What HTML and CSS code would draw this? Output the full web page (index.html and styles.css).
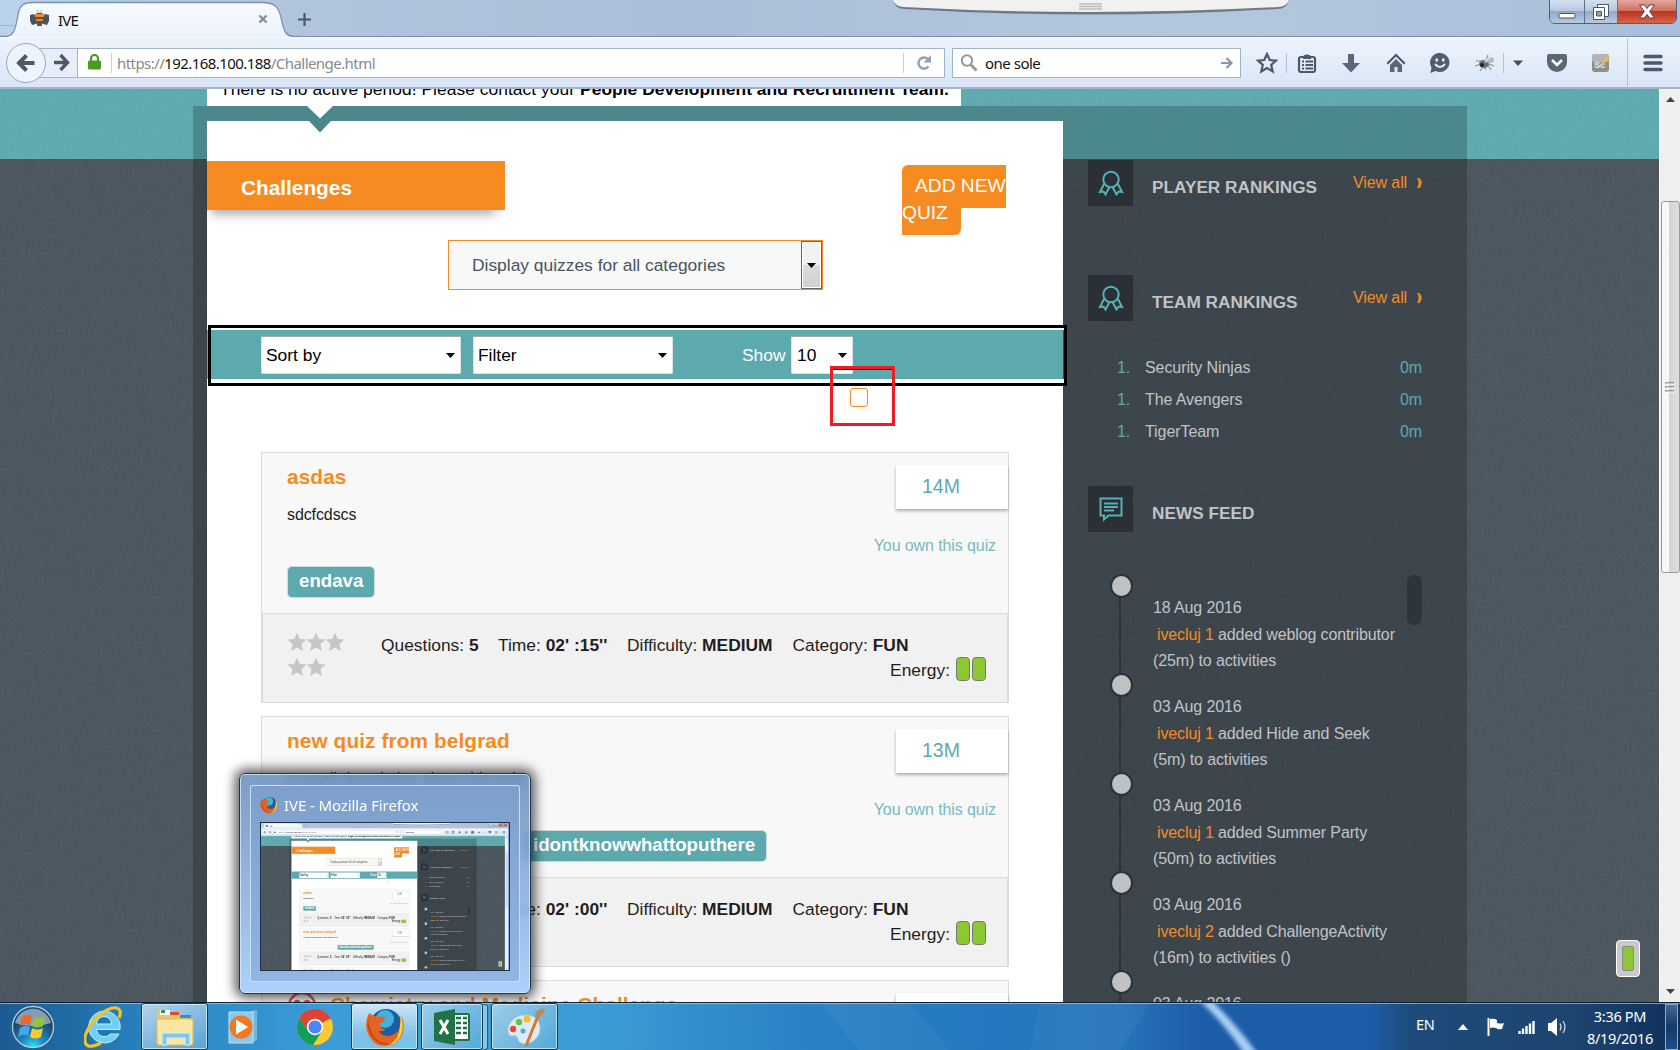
FILE: index.html
```html
<!DOCTYPE html>
<html lang="en">
<head>
<meta charset="utf-8">
<title>IVE</title>
<link rel="stylesheet" href="styles.css">
</head>
<body>
<div class="browser" id="browser">
  <div class="tabstrip">
    <svg class="tab-shape" width="300" height="38" viewBox="0 0 300 38">
      <defs><linearGradient id="tabg" x1="0" y1="0" x2="0" y2="1"><stop offset="0" stop-color="#f8fbfe"/><stop offset="1" stop-color="#eaf2fb"/></linearGradient></defs>
      <path d="M0 38 V36.5 H4 C13 36.5 15 31 17 20 C19 7 21 2.5 32 2.5 H262 C275 2.5 279 7 281.500 20 C284 32 286 36.500 295 36.500 H300 V38Z" fill="url(#tabg)"/>
      <path d="M0 36.500 H4 C13 36.500 15 31 17 20 C19 7 21 2.500 32 2.500 H262 C275 2.500 279 7 281.500 20 C284 32 286 36.500 295 36.500 H300" fill="none" stroke="#7d90a8" stroke-width="1.300"/>
    </svg>
    <div class="tab">
      <svg width="21" height="18" viewBox="0 0 21 18"><path d="M1 5l4-1 2 3v7l-4 1-2-4zM20 5l-4-1-2 3v7l4 1 2-4z" fill="#4c545e"/><rect x="6" y="3" width="9" height="11" rx="3" fill="#59504a"/><path d="M6 4h9v3H6zM7 9h7v2H7z" fill="#f08a24"/><path d="M8 0l2 3M13 0l-2 3" stroke="#aaa"/><rect x="8" y="13" width="5" height="3" fill="#555"/></svg>
      <span class="tab-title">IVE</span>
      <svg class="tab-x" width="10" height="10" viewBox="0 0 10 10"><path d="M1.500 1.500l7 7M8.500 1.500l-7 7" stroke="#86909c" stroke-width="2.400"/></svg>
      <svg width="13" height="13" viewBox="0 0 13 13"><path d="M6.500 0v13M0 6.500h13" stroke="#4d5967" stroke-width="2.200"/></svg>
    </div>
    <svg class="remote-bar" width="400" height="20" viewBox="0 0 400 20"><path d="M2 0 Q4 9 14 9 Q200 20 386 9 Q396 9 398 0Z" fill="#55606c" opacity=".75"/><path d="M2 0 Q4 6 12 7 Q200 17 388 7 Q396 6 398 0Z" fill="#f1f1f1"/><path d="M188 4h23M188 6.500h23M188 9h23" stroke="#bdbdbd" stroke-width="1.400"/></svg>
    <div class="winctl">
      <span class="wc wc-min"><svg width="18" height="8" viewBox="0 0 18 8"><rect x="1" y="1.500" width="16" height="4.500" rx="1" fill="#fff" stroke="#4a5566"/></svg></span>
      <span class="wc wc-max"><svg width="18" height="18" viewBox="0 0 18 18"><g fill="#fff" stroke="#4a5566"><path d="M5.500 1.500h11v12h-11z"/><path d="M1.500 4.500h11v12h-11z"/><path d="M4.500 8.500h5v4.500h-5z" fill="#8fa6c0"/></g></svg></span>
      <span class="wc wc-close"><svg width="18" height="15" viewBox="0 0 18 15"><path d="M1.500 1h5l2.500 3.500L11.500 1h5l-4.800 6.500 4.800 6.500h-5L9 10.500 6.500 14h-5l4.800-6.500z" fill="#fff" stroke="#5a3a40"/></svg></span>
    </div>
  </div>
  <div class="toolbar">
    <div class="back"><svg width="20" height="20" viewBox="0 0 20 20"><path d="M18.500 10H4M10.500 2.500L3 10l7.500 7.500" fill="none" stroke="#4d5967" stroke-width="4"/></svg></div>
    <div class="urlbar">
      <div class="fwd"><svg width="17" height="19" viewBox="0 0 17 19"><path d="M1 9.500h12M7.500 2l7 7.500-7 7.500" fill="none" stroke="#4d5967" stroke-width="3.400"/></svg></div>
      <svg class="lock" width="13" height="16" viewBox="0 0 13 16"><path d="M3 7V4.500a3.500 3.500 0 0 1 7 0V7" fill="none" stroke="#4a9a22" stroke-width="2.200"/><rect x="0" y="6.500" width="13" height="9" rx="1.500" fill="#4a9a22"/></svg>
      <i class="vsep"></i>
      <span class="url">https://<b>192.168.100.188</b>/Challenge.html</span>
      <i class="vsep reload-sep"></i>
      <svg class="reload" width="16" height="16" viewBox="0 0 16 16"><path d="M12.500 11.500A5.600 5.600 0 1 1 12 4" fill="none" stroke="#93a2b3" stroke-width="2.500"/><path d="M15 0v7.500H7.500z" fill="#93a2b3"/></svg>
    </div>
    <div class="search">
      <svg width="18" height="18" viewBox="0 0 18 18"><circle cx="7" cy="6.500" r="5.200" fill="none" stroke="#999" stroke-width="2"/><path d="M10.500 10.500l6 6" stroke="#999" stroke-width="3"/></svg>
      <span>one sole</span>
      <svg width="12" height="12" viewBox="0 0 12 12"><path d="M0 6h9M5.500 1l5 5-5 5" fill="none" stroke="#8798aa" stroke-width="2.200"/></svg>
    </div>
    <div class="tools">
      <svg width="22" height="22" viewBox="0 0 22 22"><path d="M11 2l2.700 6 6.300.6-4.800 4.300 1.500 6.500L11 16l-5.700 3.400 1.500-6.500L2 8.600 8.300 8z" fill="none" stroke="#4d5967" stroke-width="2.200"/></svg>
      <i class="vsep"></i>
      <svg width="20" height="20" viewBox="0 0 20 20"><rect x="2" y="4" width="16" height="15" rx="2" fill="none" stroke="#4d5967" stroke-width="2.200"/><path d="M6 4l1-2h1.500a2 2 0 0 1 3 0H13l1 2v2H6z" fill="#4d5967"/><path d="M5 8.500h2M8.500 8.500H16M5 12h2M8.500 12H16M5 15.500h2M8.500 15.500H16" stroke="#4d5967" stroke-width="1.800"/></svg>
      <svg width="20" height="20" viewBox="0 0 20 20"><path d="M7 1h6v9h6l-9 9.500L1 10h6z" fill="#5b6774"/></svg>
      <svg width="20" height="20" viewBox="0 0 20 20"><path d="M10 0.500L0.500 10l1.500 1.500 8-8 8 8 1.500-1.500z" fill="#4d5967"/><path d="M10 6l6 6v7h-4.500v-5h-3v5H4v-7z" fill="#5b6774"/></svg>
      <svg width="22" height="22" viewBox="0 0 22 22"><path d="M11 1a9.500 9.500 0 1 1-4.500 17.900L1.500 21l1-5.500A9.500 9.500 0 0 1 11 1z" fill="#515d6a"/><path d="M6.500 6.500h2.500v3H6.500zM13 6.500h2.500v3H13z" fill="#e6eff9"/><path d="M6 12q5 6 10 0" fill="none" stroke="#e6eff9" stroke-width="2"/></svg>
      <svg width="22" height="20" viewBox="0 0 22 20"><g stroke="#8a8d90" stroke-width="1.100" fill="none"><path d="M2 8h6l2 2M1 13l6-2M6 18l4-6M11 17l1-5M17 17l-3-5M20 13l-5-2M14 2l-2 5"/></g><ellipse cx="10" cy="11" rx="5" ry="4" fill="#6b6d70"/><ellipse cx="16" cy="7" rx="4" ry="3" fill="#b8babc"/><circle cx="8" cy="12" r="2" fill="#222"/><path d="M11 9l5-5" stroke="#ddd" stroke-width="2"/></svg>
      <i class="vsep"></i>
      <svg width="10" height="6" viewBox="0 0 10 6"><path d="M0 .5h10L5 6z" fill="#4d4d4d"/></svg>
      <svg width="22" height="20" viewBox="0 0 22 20"><path d="M3 1h16q2 0 2 2v6a10 10 0 0 1-20 0V3q0-2 2-2z" fill="#5b6774"/><path d="M6 7l5 5 5-5" fill="none" stroke="#fff" stroke-width="2.600"/></svg>
      <svg width="20" height="20" viewBox="0 0 20 20"><rect x="1" y="1" width="17" height="18" rx="3" fill="#8f8f8f"/><rect x="1" y="1" width="17" height="8" rx="3" fill="#b5b5b5"/><text x="3" y="15" class="sc">Sc</text><path d="M10 11l7-9 2 1.500-7 9z" fill="#e6bb4e"/></svg>
      <i class="vsep tall"></i>
      <svg width="20" height="18" viewBox="0 0 20 18"><path d="M2 2.500h16M2 9h16M2 15.500h16" stroke="#4d5967" stroke-width="3.400" stroke-linecap="round"/></svg>
    </div>
  </div>
  <div class="viewport">
    <div class="page">
      <svg class="grain" width="1658" height="913"><filter id="grain"><feTurbulence type="fractalNoise" baseFrequency=".4 .3" numOctaves="2" seed="4"/><feColorMatrix type="saturate" values="0"/></filter><rect width="1658" height="913" filter="url(#grain)"/></svg>
      <div class="notice"><p>There is no active period! Please contact your <b>People Development and Recruitment Team.</b></p></div>
      <div class="shell">
        <svg class="pointer" width="26" height="27" viewBox="0 0 26 27"><path d="M0 0h26L13 12.500z" fill="#fff"/><path d="M2 15h22L13 26.500z" fill="#4a8889"/></svg>
        <main class="main">
          <div class="head">
            <h1>Challenges</h1>
            <div class="add"><a>ADD NEW<br>QUIZ</a></div>
          </div>
          <div class="category"><span>Display quizzes for all categories</span><i><svg width="9" height="5" viewBox="0 0 9 5"><path d="M0 0h9L4.500 5z"/></svg></i></div>
          <div class="sortbar">
            <div class="sel">Sort by<svg width="9" height="5" viewBox="0 0 9 5"><path d="M0 0h9L4.500 5z"/></svg></div>
            <div class="sel">Filter<svg width="9" height="5" viewBox="0 0 9 5"><path d="M0 0h9L4.500 5z"/></svg></div>
            <span class="show">Show</span>
            <div class="sel small">10<svg width="9" height="5" viewBox="0 0 9 5"><path d="M0 0h9L4.500 5z"/></svg></div>
          </div>
          <div class="check"></div>
          <article class="card">
            <div class="body">
              <div class="left"><h2>asdas</h2><p>sdcfcdscs</p><span class="tag">endava</span></div>
              <div class="right"><div class="pts">14M</div><p>You own this quiz</p></div>
            </div>
            <div class="foot">
              <div class="stars"><svg><use href="#star"/></svg><svg><use href="#star"/></svg><svg><use href="#star"/></svg><svg><use href="#star"/></svg><svg><use href="#star"/></svg></div>
              <div class="stats">
                <div class="line"><span class="q">Questions: <b>5</b></span><span class="t">Time: <b>02' :15''</b></span><span class="d">Difficulty: <b>MEDIUM</b></span><span>Category: <b>FUN</b></span></div>
                <div class="energy">Energy: <i></i><i></i></div>
              </div>
            </div>
          </article>
          <article class="card">
            <div class="body">
              <div class="left"><h2>new quiz from belgrad</h2><p>a small description about this quiz</p><div class="tags"><span class="tag">idontknowwhattoputhere</span></div></div>
              <div class="right"><div class="pts">13M</div><p>You own this quiz</p></div>
            </div>
            <div class="foot">
              <div class="stars"><svg><use href="#star"/></svg><svg><use href="#star"/></svg><svg><use href="#star"/></svg><svg><use href="#star"/></svg><svg><use href="#star"/></svg></div>
              <div class="stats">
                <div class="line"><span class="q">Questions: <b>5</b></span><span class="t">Time: <b>02' :00''</b></span><span class="d">Difficulty: <b>MEDIUM</b></span><span>Category: <b>FUN</b></span></div>
                <div class="energy">Energy: <i></i><i></i></div>
              </div>
            </div>
          </article>
          <article class="card">
            <div class="body">
              <div class="left"><h2 class="withface"><svg width="30" height="30" viewBox="0 0 30 30"><g fill="none" stroke="#d9534f" stroke-width="2.400"><circle cx="15" cy="15" r="13"/><path d="M7 12q3-4 6 0M17 12q3-4 6 0M9 21q6-5 12 0"/></g></svg>Chemistry and Medicine Challenge</h2></div>
              <div class="right"><div class="pts"></div></div>
            </div>
          </article>
        </main>
        <aside class="side">
          <section class="rank first">
            <div class="ico"><svg width="26" height="26" viewBox="0 0 26 26"><use href="#medal"/></svg></div>
            <h3>PLAYER RANKINGS</h3><a>View all <svg width="6" height="10" viewBox="0 0 6 10"><path d="M0 0h2.500Q7 5 2.500 10H0Q3 5 0 0z" fill="#e08a2c"/></svg></a>
          </section>
          <section class="rank">
            <div class="ico"><svg width="26" height="26" viewBox="0 0 26 26"><use href="#medal"/></svg></div>
            <h3>TEAM RANKINGS</h3><a>View all <svg width="6" height="10" viewBox="0 0 6 10"><path d="M0 0h2.500Q7 5 2.500 10H0Q3 5 0 0z" fill="#e08a2c"/></svg></a>
          </section>
          <ul class="teams">
            <li><em>1.</em>Security Ninjas<em>0m</em></li>
            <li><em>1.</em>The Avengers<em>0m</em></li>
            <li><em>1.</em>TigerTeam<em>0m</em></li>
          </ul>
          <section class="rank news">
            <div class="ico"><svg width="26" height="26" viewBox="0 0 26 26"><g fill="none" stroke="#57b0b3" stroke-width="2"><path d="M2.500 2.500h21v17h-13l-4.500 4v-4H2.500z"/><path d="M6 7.500h14M6 11h14M6 14.500h10"/></g></svg></div>
            <h3>NEWS FEED</h3>
          </section>
          <div class="feedwrap">
            <ol class="feed">
              <li><p>18 Aug 2016</p><p><a>ivecluj 1</a> added weblog contributor</p><p>(25m) to activities</p></li>
              <li><p>03 Aug 2016</p><p><a>ivecluj 1</a> added Hide and Seek</p><p>(5m) to activities</p></li>
              <li><p>03 Aug 2016</p><p><a>ivecluj 1</a> added Summer Party</p><p>(50m) to activities</p></li>
              <li><p>03 Aug 2016</p><p><a>ivecluj 2</a> added ChallengeActivity</p><p>(16m) to activities ()</p></li>
              <li><p>03 Aug 2016</p></li>
            </ol>
            <div class="feed-thumb"></div>
          </div>
        </aside>
      </div>
      <div class="battery"><i></i></div>
    </div>
    <div class="scroll">
      <svg width="9" height="5" viewBox="0 0 9 5"><path d="M0 5h9L4.500 0z" fill="#444"/></svg>
      <div class="scroll-thumb"><svg width="10" height="11" viewBox="0 0 10 11"><path d="M0 1h9M0 5h9M0 9h9" stroke="#555" stroke-width="1.200"/><path d="M1 2h9M1 6h9M1 10h9" stroke="#fff"/></svg></div>
      <svg class="dn" width="9" height="5" viewBox="0 0 9 5"><path d="M0 0h9L4.500 5z" fill="#444"/></svg>
    </div>
  </div>
</div>

<div class="mark mark-black"></div>
<div class="mark mark-red"></div>
<div class="mark mark-line"></div>

<div class="preview">
  <div class="preview-in">
    <div class="preview-title"><svg width="18" height="18" viewBox="0 0 40 40"><use href="#fox"/></svg><span>IVE - Mozilla Firefox</span></div>
    <div class="thumb" id="thumb"></div>
  </div>
</div>

<div class="taskbar">
  <svg class="streak" width="1680" height="48" viewBox="0 0 1680 48"><defs><linearGradient id="st" x1="0" x2="1"><stop offset="0" stop-color="#9cc8f2" stop-opacity="0"/><stop offset=".5" stop-color="#a9cff4"/><stop offset="1" stop-color="#9cc8f2" stop-opacity="0"/></linearGradient><filter id="soft"><feGaussianBlur stdDeviation="2"/></filter></defs><path d="M820 0h90l40 48h-90zM1040 0h110l-30 48h-90z" fill="#fff" opacity=".04"/><path d="M1200 -2h12Q1235 20 1257 50h-13Q1224 20 1200 -2z" fill="#a9cff4" filter="url(#soft)"/></svg>
  <div class="tb orb"><svg width="44" height="44" viewBox="0 0 44 44"><defs><radialGradient id="og" cx=".5" cy="1" r=".9"><stop offset="0" stop-color="#2ee4ff"/><stop offset=".35" stop-color="#1a86bd"/><stop offset=".8" stop-color="#1a4468"/></radialGradient></defs><circle cx="22" cy="22" r="20.500" fill="url(#og)" stroke="#b9cbdb" stroke-width="1.300"/><path d="M4 18a18.500 18.500 0 0 1 36 0q-18 6-36 0z" fill="#dce7ef" opacity=".55"/><path d="M11 12q5-4 10-1l-2 9q-5-3-10 1z" fill="#f0652a"/><path d="M23 12q5 3 11-1l-2 10q-6 3-11 0z" fill="#8fc63f"/><path d="M9 23q5-4 10-1l-2 9q-5-3-10 1z" fill="#45a6e6"/><path d="M21 23q5 3 11 0l-2 9q-6 3-11 0z" fill="#fdc92f"/></svg></div>
  <div class="tb ie"><svg width="40" height="42" viewBox="0 0 40 42"><path d="M20 5a16 16 0 1 0 15 23h-8.500a8 8 0 0 1-14-4.500H36A16 16 0 0 0 20 5zm-7.500 13a7.500 7.500 0 0 1 15 0z" fill="#6fd0f5" stroke="#c5effc"/><path d="M35 12c4-9-2-13-12-8C10 10-3 30 2 38c2 4 9 2 15-1" fill="none" stroke="#f3c51c" stroke-width="3.200"/></svg></div>
  <div class="tb task on"><svg width="42" height="42" viewBox="0 0 42 42"><path d="M3 6q0-3 3-3h7l3 3h9l2 3h10v26H3z" fill="#e9c766"/><path d="M3 13h36v24q0 2-2 2H5q-2 0-2-2z" fill="#f9e6a2" stroke="#dcb958"/><path d="M6 4h10v5H6z" fill="#fff"/><path d="M7 4h4v3H7z" fill="#2f9b4a"/><path d="M16 6h9v3h-9z" fill="#d84c36"/><path d="M26 9h11v3H26z" fill="#3b8bd3"/><path d="M8 27h28v12h-5v-7H13v7H8z" fill="#80c9ee" stroke="#d5f1fc"/></svg></div>
  <div class="tb wmp"><svg width="36" height="38" viewBox="0 0 36 38"><path d="M24 3l7-1v30l-7 3z" fill="#73b7df"/><path d="M3 4h24v31H3z" fill="#8bc8ea" stroke="#bde2f5"/><circle cx="15" cy="19" r="11.500" fill="#f17922"/><path d="M10 11.500v15l12-7.500z" fill="#fff"/></svg></div>
  <div class="tb chrome"><svg width="36" height="36" viewBox="0 0 36 36"><circle cx="18" cy="18" r="18" fill="#fbc934"/><path d="M18 18L2.400 9A18 18 0 0 1 33.600 9z" fill="#dc4437"/><path d="M18 10h16a18 18 0 0 0-31.600-1L11 22z" fill="#dc4437"/><path d="M2.400 9A18 18 0 0 0 16 36l8.500-13L18 18l-7 4z" fill="#109d58"/><circle cx="18" cy="18" r="8.200" fill="#fff"/><circle cx="18" cy="18" r="6.600" fill="#4a87f3"/></svg></div>
  <div class="tb task lit"><svg width="40" height="40" viewBox="0 0 40 40"><use href="#fox"/></svg></div>
  <div class="tb task xl"><svg width="38" height="38" viewBox="0 0 38 38"><rect x="20" y="5" width="17" height="28" rx="2" fill="#1e7145"/><path d="M21 7h14v24H21z" fill="#fff"/><path d="M23 10h5M30 10h4M23 15h5M30 15h4M23 20h5M30 20h4M23 25h5M30 25h4" stroke="#1e7145" stroke-width="2.600"/><path d="M1 5l21-4v36L1 33z" fill="#207347"/><path d="M7 12l8 14M15 12L7 26" stroke="#fff" stroke-width="3"/></svg></div>
  <div class="xl-stack"></div>
  <div class="tb task paint"><svg width="40" height="40" viewBox="0 0 40 40"><path d="M20 8C8 8 2 18 3 25c1 6 6 3 8 4 3 2 1 7 8 8 9 0 17-8 16-17S28 8 20 8z" fill="#dcebf5" stroke="#a9c9de"/><circle cx="8" cy="22" r="3.200" fill="#e54b38"/><circle cx="14" cy="15" r="3.200" fill="#66c04b"/><circle cx="22" cy="12" r="3.500" fill="#fbb92d"/><circle cx="18" cy="24" r="2.500" fill="#58a7d5"/><path d="M21 39L33 9" stroke="#d57a2b" stroke-width="3"/><path d="M30 10q-1-8 10-9-1 8-7 10z" fill="#b98a5a"/></svg></div>
  <div class="tray">
    <span class="en">EN</span>
    <svg class="t1" width="10" height="6" viewBox="0 0 10 6"><path d="M0 6h10L5 0z" fill="#fff"/></svg>
    <svg class="t2" width="18" height="20" viewBox="0 0 18 20"><path d="M1.500 1v18" stroke="#fff" stroke-width="2"/><path d="M3 2q4-1 7 1v3q4 1 7 0l-2 6q-4 1-6-1-3-1-6 0z" fill="#fff"/></svg>
    <svg class="t3" width="17" height="14" viewBox="0 0 17 14"><path d="M1.500 14v-3M5 14V8.500M8.500 14V6M12 14V3.500M15.500 14V1" stroke="#fff" stroke-width="2.400"/></svg>
    <svg class="t4" width="20" height="20" viewBox="0 0 20 20"><path d="M1 6h3l6-5v18l-6-5H1z" fill="#fff"/><path d="M13 6.500q2 3.500 0 7M16 4q4 6 0 12" fill="none" stroke="#cfdbe8" stroke-width="1.300"/></svg>
    <div class="clock"><span>3:36 PM</span><span>8/19/2016</span></div>
    <div class="peek"></div>
  </div>
</div>

<svg class="defs" width="0" height="0">
  <symbol id="star" viewBox="0 0 18 18"><path d="M9 .5l2.600 5.700 6.200.6-4.700 4.200 1.400 6.300L9 14.200l-5.500 3.100L4.900 11 .2 6.800l6.200-.6z" fill="#c6c6c6" stroke="#c6c6c6" stroke-width=".6"/></symbol>
  <symbol id="medal" viewBox="0 0 26 26"><g fill="none" stroke="#57b0b3" stroke-width="2"><circle cx="13" cy="9.500" r="7.700"/><path d="M6 14L2 22l3.500-.5L7.500 24.500l4-7.500M20 14l4 8-3.500-.5L18.500 24.500l-4-7.500"/></g></symbol>
  <symbol id="fox" viewBox="0 0 40 40"><circle cx="21" cy="18" r="16" fill="#1c5f9f"/><circle cx="20" cy="12" r="9" fill="#41b2e2"/><path d="M4 6q-6 12 0 23t17 10q12-1 16-11t-1-20q2 10-2 15t-10 6q-8 0-10-5 4 1 7-2-4 1-6-3 0-4 4-4-1-3 2-4-4-3-8-1Q8 9 4 6z" fill="#e5641d"/><path d="M35 8q5 10 1 20t-15 11q11-4 13-14t1-17z" fill="#f9d342"/><path d="M4 10q-4 12 4 21t20 6q-16 0-21-11T4 10z" fill="#cc3d17"/></symbol>
</svg>
<script src="page.js"></script>
</body>
</html>
```
FILE: page.js
```js
// Live miniature of the browser window inside the taskbar preview.
const mini = document.getElementById('browser').cloneNode(true);
mini.removeAttribute('id');
mini.classList.add('mini');
mini.setAttribute('aria-hidden', 'true');
document.getElementById('thumb').appendChild(mini);
```
FILE: styles.css
```css
* { box-sizing: border-box; }
html, body { margin: 0; width: 1680px; height: 1050px; overflow: hidden; }
body { position: relative; font-family: "Liberation Sans", Arial, sans-serif; font-size: 16px; color: #222; }
h1, h2, h3, p, ul, ol { margin: 0; padding: 0; list-style: none; }
svg { display: block; flex: none; }
i, em { font-style: normal; }
.defs { position: absolute; }

.browser { width: 1680px; height: 1002px; display: flex; flex-direction: column; overflow: hidden; background: #dfeaf8; }
.tabstrip { position: relative; flex: none; height: 37px; display: flex; background: radial-gradient(ellipse at 0 70%, #86a8a6 0, rgba(134,168,166,0) 50px), linear-gradient(90deg, #b9d3ea 0, #b0c5dc 300px, #abc0d8 700px, #b3c7dc 1200px, #a9bfda 1680px); border-bottom: 1px solid #7d90a8; }
.tab-shape { position: absolute; left: 0; top: 0; }
.tab { position: relative; display: flex; align-items: center; height: 38px; padding-left: 29px; width: 320px; }
.tab-title { margin: 2px 0 0 8px; width: 200px; font: 15px/20px "Noto Sans", sans-serif; letter-spacing: -.8px; color: #111; }
.tab-x { margin-right: 30px; }
.remote-bar { position: absolute; left: 891px; top: 0; }
.winctl { position: absolute; left: 1549px; top: -1px; display: flex; height: 25px; border: 1px solid #4f6078; border-radius: 0 0 6px 6px; overflow: hidden; }
.wc { display: flex; align-items: center; justify-content: center; background: linear-gradient(#d3e0ee, #b4c8de 48%, #93abc7 50%, #b5cae1); border-right: 1px solid #5f7088; }
.wc-min { width: 35px; padding-top: 8px; }
.wc-max { width: 33px; }
.wc-close { width: 58px; border: 0; background: linear-gradient(#e4a79c, #d16d5d 48%, #bd3421 50%, #d86449); }

.toolbar { position: relative; flex: none; height: 52px; display: flex; align-items: center; background: linear-gradient(#edf4fc, #d9e6f7); border-top: 1px solid #f6fafe; border-bottom: 2px solid #a3b4ca; }
.back { position: relative; z-index: 1; flex: none; margin-left: 6px; width: 40px; height: 40px; border: 1px solid #96a7bb; border-radius: 50%; background: #edf4fc; display: flex; align-items: center; justify-content: center; }
.urlbar { margin-left: -10px; width: 909px; height: 30px; border: 1px solid #9fb3ca; background: #fff; display: flex; align-items: center; flex: none; }
.fwd { width: 41px; height: 28px; padding: 4px 0 0 16px; background: #e6eff9; border-right: 1px solid #9fb3ca; }
.lock { margin: -1px 10px 0 10px; }
.vsep { width: 1px; height: 20px; background: #d0d0d0; flex: none; }
.url { margin: 1px 0 0 5px; width: 786px; font: 15px/20px "Noto Sans", sans-serif; letter-spacing: -.56px; color: #888; white-space: nowrap; }
.url b { font-weight: 400; color: #111; }
.reload { margin-left: 12px; }
.search { margin-left: 7px; width: 289px; height: 30px; border: 1px solid #9fb3ca; background: #fff; display: flex; align-items: center; flex: none; padding: 0 7px; }
.search span { flex: 1; margin: 1px 0 0 7px; font: 15px/20px "Noto Sans", sans-serif; letter-spacing: -.5px; color: #111; }
.tools { display: flex; align-items: center; margin-left: 15px; }
.tools .vsep { height: 20px; background: #b3c2d4; }
.tools > :nth-child(2) { margin: 0 9.5px 0 8px; }
.tools > :nth-child(4) { margin-left: 24.500px; }
.tools > :nth-child(5) { margin-left: 25px; }
.tools > :nth-child(6) { margin-left: 23px; }
.tools > :nth-child(7) { margin-left: 22.500px; }
.tools > :nth-child(8) { margin: 0 9px 0 7px; }
.tools > :nth-child(10) { margin-left: 23px; }
.tools > :nth-child(11) { margin-left: 23.500px; }
.tools > .tall { height: 50px; margin: 0 15.500px; }
.sc { font: bold 9px "Liberation Sans", sans-serif; fill: #eee; }

.viewport { flex: 1; display: flex; min-height: 0; }
.page { position: relative; width: 1659px; overflow: hidden; background: linear-gradient(#5caaae 70px, #49545d 70px); }
.grain { position: absolute; left: 0; top: 0; opacity: .07; }
.notice { position: relative; margin-left: 207px; width: 754px; height: 17px; background: #fff; overflow: hidden; color: #000; }
.notice p { margin: -12px 0 0 13px; font-size: 17.4px; line-height: 24px; white-space: nowrap; letter-spacing: .05px; }
.shell { position: relative; margin-left: 193px; width: 1274px; height: 896px; padding: 15px 0 0 14px; background: rgba(0,0,0,.2); display: flex; }
.pointer { position: absolute; left: 114px; top: 0; z-index: 2; }
.main { flex: none; width: 856px; height: 900px; padding-top: 40px; background: #fff; }
.head { display: flex; height: 49px; }
.head h1 { width: 298px; padding-left: 34px; background: #f68b22; color: #fff; font-size: 20.8px; line-height: 54px; height: 49px; box-shadow: -3px 11px 10px -7px rgba(0,0,0,.35); }
.add { margin: 11px 0 0 397px; font-size: 19.2px; line-height: 27px; color: #fff; white-space: nowrap; }
.add a { background: #f68b22; padding: 10px 13px 12px; border-radius: 6px; }
.category { margin: 30px 0 0 241px; width: 375px; height: 50px; border: 1px solid #f68b22; background: #f8f8f8; display: flex; justify-content: space-between; padding-left: 23px; color: #49545d; font-size: 17.4px; line-height: 48px; }
.category i { width: 21px; border: 1px solid #666; box-shadow: inset 0 0 0 1px #fff; background: linear-gradient(#f2f2f2 50%, #dcdcdc 50%, #cfcfcf); display: flex; align-items: center; justify-content: center; }
.sortbar { margin-top: 40px; height: 49px; background: #5caaae; padding: 6px 0 0 54px; display: flex; font-size: 17.4px; line-height: 36px; color: #000; }
.sel { width: 200px; height: 38px; margin-right: 12px; border: 1px solid #dfe3e3; border-top-color: #aaa; border-radius: 2px; background: #fff; padding: 0 5px 0 4px; display: flex; align-items: center; justify-content: space-between; }
.sel.small { width: 62px; padding-left: 5px; }
.show { margin-left: 57px; width: 49px; color: #fff; line-height: 38px; }
.check { margin: 9px 0 45px 643px; width: 18px; height: 19px; border: 1px solid #f68b22; border-radius: 3px; }

.card { margin: 0 54px 13px; height: 251px; border: 1px solid #dcdcdc; background: #f8f8f8; }
.body { height: 160px; display: flex; justify-content: space-between; }
.left { padding: 9px 0 0 25px; }
.card h2 { font-size: 20.8px; line-height: 30px; color: #f68b22; white-space: nowrap; letter-spacing: .1px; }
.withface { display: flex; gap: 13px; }
.withface svg { margin-top: 1px; }
.left p { margin-top: 11px; line-height: 24px; letter-spacing: -.1px; }
.tag { display: inline-block; margin-top: 39px; height: 32px; padding: 0 11px; border: 1px solid #cfdcdc; border-radius: 5px; background: #5caaae; color: #fff; font-weight: bold; font-size: 18.7px; line-height: 27px; }
.tags { padding-left: 234px; }
.right { padding-top: 12px; text-align: right; }
.pts { margin-left: auto; width: 112px; height: 44px; padding-left: 26px; background: #fff; box-shadow: 0 2px 3px rgba(0,0,0,.3); text-align: left; color: #5caaae; font-size: 19.5px; line-height: 42px; }
.right p { margin: 25px 12px 0 0; line-height: 24px; color: #7bbabd; letter-spacing: -.1px; }
.foot { height: 90px; border: 1px solid #dcdcdc; background: #f1f1f1; padding: 19px 21px 0 25px; display: flex; font-size: 17.4px; line-height: 25px; color: #1e1e1e; }
.stars { flex: none; width: 60px; display: flex; flex-wrap: wrap; gap: 7px 1px; align-content: flex-start; }
.stars svg { width: 18px; height: 18px; }
.stats { flex: 1; padding-left: 33px; white-space: nowrap; }
.line { display: flex; }
.q { width: 117px; } .t { width: 129px; } .d { width: 165.5px; }
.energy { display: flex; justify-content: flex-end; gap: 2px; }
.energy i { margin-top: -1px; width: 14px; height: 24px; border: 1px solid #777; border-radius: 4px; background: #8cc832; }
.energy i:first-of-type { margin-left: 4px; }

.side { padding: 39px 0 0 25px; width: 404px; color: #c1c4c6; }
.rank { display: flex; height: 46px; margin-bottom: 69px; }
.ico { width: 45px; height: 46px; background: #2a3035; padding: 10px 0 0 10px; flex: none; }
.rank h3 { margin-left: 19px; width: 201px; font-size: 17.2px; line-height: 55px; white-space: nowrap; letter-spacing: .03px; }
.rank a { display: flex; align-items: center; gap: 10px; height: 45px; color: #f68b22; letter-spacing: -.1px; }
.teams { margin: -38px 0 38px; padding-left: 29px; letter-spacing: -.08px; }
.teams li { display: flex; height: 32px; line-height: 32px; width: 305px; }
.teams em { color: #5caaae; width: 28px; }
.teams em:last-child { margin-left: auto; width: auto; }
.rank.news { margin-bottom: 43px; }
.feedwrap { display: flex; height: 428px; }
.feed { width: 319px; padding-left: 31px; }
.feed li { position: relative; height: 99px; padding: 19px 0 0 32px; border-left: 2px solid #2b3339; line-height: 27px; white-space: nowrap; letter-spacing: -.12px; }
.feed li::before { content: ""; position: absolute; left: -11px; top: -1px; width: 19px; height: 20px; border-radius: 50%; background: #bfc1c3; border: 2px solid #2b3339; }
.feed p:nth-child(2) { padding-left: 4px; }
.feed p:nth-child(3) { margin-top: -1px; }
.feed a { color: #f68b22; }
.feed-thumb { width: 15px; height: 50px; border-radius: 7px; background: #2d353c; }
.battery { position: absolute; left: 1616px; top: 851px; width: 24px; height: 37px; border: 1px solid #fff; border-radius: 4px; background: #c9c9c9; padding: 5px; }
.battery i { display: block; width: 12px; height: 25px; border: 1px solid #888; border-radius: 2px; background: #8cc832; }
.scroll { width: 21px; background: #efefef; border-left: 1px solid #fff; display: flex; flex-direction: column; align-items: center; padding: 8px 0; }
.scroll-thumb { margin-top: 99px; width: 19px; height: 372px; border: 1px solid #989898; border-radius: 3px; background: linear-gradient(90deg, #f7f7f7 40%, #d4d4d7 42%, #dedee0); display: flex; align-items: center; justify-content: center; }
.scroll .dn { margin-top: auto; }

.mark { position: absolute; }
.mark-black { left: 208px; top: 325px; width: 859px; height: 61px; border: 3px solid #000; box-shadow: inset 0 2px #fff, inset 0 -4px #fff; }
.mark-red { left: 830px; top: 366px; width: 65px; height: 60px; border: 3px solid #ed1c24; }
.mark-line { left: 833px; top: 369px; width: 59px; height: 1px; background: #000; }

.preview { position: absolute; left: 239px; top: 773px; width: 292px; height: 221px; padding: 11px 10px; border: 1px solid #22374f; border-radius: 6px; background: linear-gradient(rgba(105,140,185,.86), rgba(165,205,250,.9)); backdrop-filter: blur(4px); box-shadow: inset 0 0 0 1px rgba(215,235,255,.8), 0 0 12px 4px rgba(0,0,0,.65); }
.preview-in { width: 270px; height: 197px; border: 1px solid rgba(205,228,252,.9); border-radius: 3px; padding: 9px 9px; background: linear-gradient(#7d9fca, #91b5e4); }
.preview-title { display: flex; align-items: center; height: 20px; gap: 6px; color: #fff; font: 15px/20px "Noto Sans", sans-serif; letter-spacing: -.1px; white-space: nowrap; margin-bottom: 7px; }
.thumb { width: 250px; height: 149px; border: 1px solid #1f2f45; overflow: hidden; }
.mini { transform: scale(.147); transform-origin: 0 0; }

.taskbar { position: absolute; left: 0; top: 1002px; width: 1680px; height: 48px; display: flex; align-items: center; border-top: 1px solid #0c2036; box-shadow: inset 0 1px rgba(190,220,245,.6); background: linear-gradient(90deg, #1c5b92 0, #216ba5 70px, #2984c3 150px, #3a9dd6 330px, #3b9cd3 600px, #2b82c5 800px, #2477be 1000px, #2775bb 1120px, #1c5da8 1200px, #1c5da8 1370px, #1e4b7a 1410px, #1d4570 1570px, #10305a 1680px); }
.streak { position: absolute; left: 0; top: 0; }
.tb { position: relative; flex: none; display: flex; align-items: center; justify-content: center; }
.orb { margin-left: 11px; width: 44px; }
.ie { margin-left: 29px; width: 40px; }
.task { width: 66px; height: 47px; border: 1px solid #163b59; border-radius: 3px; box-shadow: inset 0 0 0 1px rgba(220,240,255,.75); background: linear-gradient(135deg, rgba(255,255,255,.5), rgba(255,255,255,.12)); }
.on { margin-left: 17px; width: 67px; background: linear-gradient(150deg, rgba(255,255,255,.65), rgba(255,255,255,.2)); }
.wmp { margin-left: 18px; width: 36px; }
.chrome { margin-left: 35px; width: 36px; }
.lit { margin-left: 18px; width: 67px; background: linear-gradient(rgba(255,255,255,.75), rgba(255,255,255,.35) 70%, rgba(150,225,255,.6)); }
.xl { margin-left: 3px; width: 62px; }
.xl-stack { width: 5px; height: 46px; border: 1px solid #2b5d83; border-left: 0; background: #8fc5e4; border-radius: 0 3px 3px 0; position: relative; }
.paint { margin-left: 3px; width: 67px; }
.tray { position: relative; margin-left: auto; padding-right: 2px; display: flex; align-items: center; color: #fff; font: 14.5px/22px "Noto Sans", sans-serif; letter-spacing: -.3px; }
.en { width: 42px; margin-top: -5px; }
.t2 { margin-left: 19px; } .t3 { margin-left: 13px; } .t4 { margin-left: 12px; }
.clock { width: 72px; margin-left: 17px; display: flex; flex-direction: column; align-items: center; }
.peek { margin-left: 9px; width: 13px; height: 46px; border: 1px solid #8ea9c6; background: linear-gradient(#47688d, #14396a 50%, #1c5088); }
```
